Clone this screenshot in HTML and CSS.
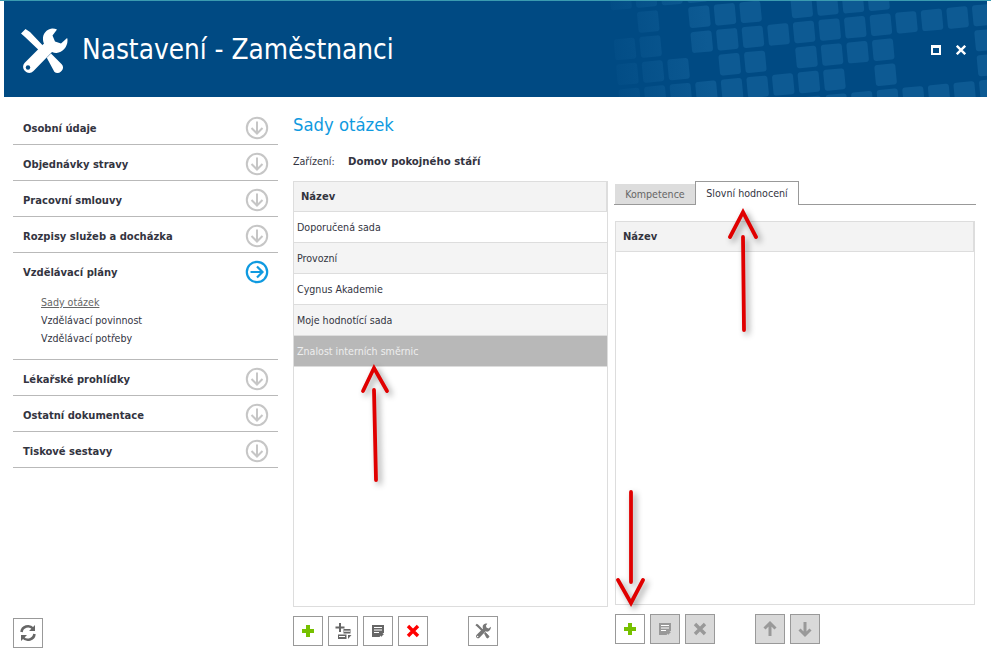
FILE: index.html
```html
<!DOCTYPE html>
<html>
<head>
    <title>Nastavení - Zaměstnanci</title>
    <link rel="stylesheet" href="styles.css">
</head>
<body>
    <svg class="sprite" width="0" height="0">
        <symbol id="i-down" viewBox="0 0 24 24"><circle cx="12" cy="12" r="10.2" fill="none" stroke="#c6c6c6" stroke-width="2"/><path d="M12 5.500v12M6.500 12l5.500 5.500 5.500-5.500" fill="none" stroke="#c6c6c6" stroke-width="2"/></symbol>
        <symbol id="i-right" viewBox="0 0 24 24"><circle cx="12" cy="12" r="10.2" fill="none" stroke="#0f9ae0" stroke-width="2.2"/><path d="M5.500 12h12M12 6.500l5.500 5.500-5.500 5.500" fill="none" stroke="#0f9ae0" stroke-width="2.2"/></symbol>
        <symbol id="i-tools" viewBox="0 0 48 48">
            <path d="M1 6.500 5.500 2 10 5 29 25l-4 4L5 10z" fill="currentColor"/>
            <path d="M28 31 31 28 41 38a3.500 3.500 0 0 1 0 5l-1 1a3.500 3.500 0 0 1-5 0z" fill="currentColor" stroke="currentColor" stroke-width="2"/>
            <path d="M32 1.500C26.500 2 22.500 7 23 12.500c0 1.500.5 3 1 4L5 35.500c-2.500 2.500-2.500 6 0 8.500s6 2.500 8.500 0L32 25c1.500.6 3 1 4.500.9C42.500 25.500 47.500 20 47.500 13.500c0-1-.1-2-.4-2.500L41 16.500 35 14.500 32.500 8.500 37 2.500C35.500 1.800 33.800 1.400 32 1.500z" fill="currentColor"/>
            <circle cx="8" cy="40.500" r="2.200" fill="var(--hole, #004a83)"/>
        </symbol>
        <symbol id="i-doc" viewBox="0 0 30 30"><path d="M9 9h12v7.500L16.500 21H9z" fill="currentColor"/><path d="M11 11.500h8M11 14h8M11 16.500h5" stroke="#fff" stroke-width="1"/><path d="M18 21v-3h3z" fill="currentColor"/></symbol>
        <symbol id="i-plus" viewBox="0 0 30 30"><path d="M13 9h4v4h4v4h-4v4h-4v-4H9v-4h4z" fill="#76c000"/></symbol>
        <symbol id="i-x" viewBox="0 0 30 30"><path d="M10 10l10 10M20 10 10 20" fill="none" stroke="currentColor" stroke-width="3.400"/></symbol>
    </svg>

    <div class="topline"></div>
    <div class="header">
        <svg class="pattern" width="983" height="96">
            <defs>
                <linearGradient id="fade" gradientUnits="userSpaceOnUse" x1="-135" y1="0" x2="-20" y2="0">
                    <stop offset="0" stop-color="#1a6aa3" stop-opacity="0"/>
                    <stop offset="1" stop-color="#1a6aa3" stop-opacity="0.5"/>
                </linearGradient>
            </defs>
            <g transform="translate(721 13.300) rotate(-5.400)" fill="url(#fade)">
                <rect class="sq" x="-113" y="-35.600"/><rect class="sq" x="-87.600" y="-35.600"/><rect class="sq" x="-61.900" y="-35.600"/><rect class="sq" x="-36.200" y="-35.600"/>
                <rect class="sq" x="-87.600" y="-10.500"/><rect class="sq" x="-36.200" y="-10.500"/><rect class="sq" x="-10.500" y="-10.500"/><rect class="sq" x="15.200" y="-10.500"/><rect class="sq" x="66.600" y="-10.500"/><rect class="sq" x="92.300" y="-10.500"/><rect class="sq" x="118" y="-10.500"/><rect class="sq" x="143.700" y="-10.500"/>
                <rect class="sq" x="-113.300" y="14.600"/><rect class="sq" x="-87.600" y="14.600"/><rect class="sq" x="-36.200" y="14.600"/><rect class="sq" x="-10.500" y="14.600"/><rect class="sq" x="15.200" y="14.600"/><rect class="sq" x="40.900" y="14.600"/><rect class="sq" x="66.600" y="14.600"/><rect class="sq" x="92.300" y="14.600"/><rect class="sq" x="118" y="14.600"/><rect class="sq" x="143.700" y="14.600"/><rect class="sq" x="169.400" y="14.600"/><rect class="sq" x="195.100" y="14.600"/><rect class="sq" x="220.800" y="14.600"/><rect class="sq" x="246.500" y="14.600"/>
                <rect class="sq" x="-113.300" y="39.700"/><rect class="sq" x="-87.600" y="39.700"/><rect class="sq" x="-61.900" y="39.700"/><rect class="sq" x="-10.500" y="39.700"/><rect class="sq" x="15.200" y="39.700"/><rect class="sq" x="66.600" y="39.700"/><rect class="sq" x="92.300" y="39.700"/><rect class="sq" x="118" y="39.700"/><rect class="sq" x="143.700" y="39.700"/><rect class="sq" x="246.500" y="39.700"/>
                <rect class="sq" x="-113.300" y="64.800"/><rect class="sq" x="-87.600" y="64.800"/><rect class="sq" x="-61.900" y="64.800"/><rect class="sq" x="-36.200" y="64.800"/><rect class="sq" x="-10.500" y="64.800"/><rect class="sq" x="15.200" y="64.800"/><rect class="sq" x="40.900" y="64.800"/><rect class="sq" x="66.600" y="64.800"/><rect class="sq" x="92.300" y="64.800"/><rect class="sq" x="143.700" y="64.800"/><rect class="sq" x="246.500" y="64.800"/>
                <rect class="sq" x="66.600" y="89.900"/><rect class="sq" x="92.300" y="89.900"/><rect class="sq" x="118" y="89.900"/><rect class="sq" x="143.700" y="89.900"/><rect class="sq" x="169.400" y="89.900"/><rect class="sq" x="195.100" y="89.900"/><rect class="sq" x="220.800" y="89.900"/><rect class="sq" x="246.500" y="89.900"/>
            </g>
        </svg>
        <svg class="logo"><use href="#i-tools"/></svg>
        <div class="title">Nastavení - Zaměstnanci</div>
        <div class="win-controls">
            <div class="win-max"></div>
            <svg class="win-close" viewBox="0 0 10 10"><path d="M.8.8l8.400 8.400M9.200.8.800 9.200" stroke="#fff" stroke-width="2.400"/></svg>
        </div>
    </div>

    <div class="content">
        <div class="sidebar">
            <div class="menu-item"><span>Osobní údaje</span><svg class="circle"><use href="#i-down"/></svg></div>
            <div class="menu-item"><span>Objednávky stravy</span><svg class="circle"><use href="#i-down"/></svg></div>
            <div class="menu-item"><span>Pracovní smlouvy</span><svg class="circle"><use href="#i-down"/></svg></div>
            <div class="menu-item"><span>Rozpisy služeb a docházka</span><svg class="circle"><use href="#i-down"/></svg></div>
            <div class="menu-group">
                <div class="menu-item open"><span>Vzdělávací plány</span><svg class="circle"><use href="#i-right"/></svg></div>
                <div class="submenu">
                    <a class="active">Sady otázek</a>
                    <a>Vzdělávací povinnost</a>
                    <a>Vzdělávací potřeby</a>
                </div>
            </div>
            <div class="menu-item"><span>Lékařské prohlídky</span><svg class="circle"><use href="#i-down"/></svg></div>
            <div class="menu-item"><span>Ostatní dokumentace</span><svg class="circle"><use href="#i-down"/></svg></div>
            <div class="menu-item"><span>Tiskové sestavy</span><svg class="circle"><use href="#i-down"/></svg></div>
            <div class="btn refresh">
                <svg class="icon" viewBox="0 0 30 30"><path d="M8.500 14a6.600 6.600 0 0 1 11.500-3.500M21.500 16a6.600 6.600 0 0 1-11.500 3.500" fill="none" stroke="#666" stroke-width="2.600"/><path d="M22 7v6h-6zM8 23v-6h6z" fill="#666"/></svg>
            </div>
        </div>

        <div class="main">
            <h1>Sady otázek</h1>
            <div class="facility"><span class="facility-label">Zařízení:</span><b>Domov pokojného stáří</b></div>
            <div class="panels">
                <div class="panel-left">
                    <div class="grid grid-sets">
                        <div class="grid-head">Název</div>
                        <div class="grid-row">Doporučená sada</div>
                        <div class="grid-row alt">Provozní</div>
                        <div class="grid-row">Cygnus Akademie</div>
                        <div class="grid-row alt">Moje hodnotící sada</div>
                        <div class="grid-row selected">Znalost interních směrnic</div>
                    </div>
                    <div class="toolbar">
                        <div class="btn"><svg class="icon"><use href="#i-plus"/></svg></div>
                        <div class="btn">
                            <svg class="icon dark" viewBox="0 0 30 30"><path d="M11 7h2v3.500h3.500v2H13V16h-2v-3.500H7.500v-2H11z"/><path d="M15.500 13h7v4.500h-7zM10 18.500h8.500V23H10z"/><path d="M20 23v-4h3.500z"/><path d="M16 15.200h6M11 20.500h6" stroke="#fff"/></svg>
                        </div>
                        <div class="btn"><svg class="icon dark"><use href="#i-doc"/></svg></div>
                        <div class="btn"><svg class="icon red"><use href="#i-x"/></svg></div>
                        <div class="btn tools-btn"><svg class="icon tools"><use href="#i-tools"/></svg></div>
                    </div>
                </div>
                <div class="panel-right">
                    <div class="tabs">
                        <div class="tab">Kompetence</div>
                        <div class="tab active">Slovní hodnocení</div>
                    </div>
                    <div class="grid grid-words">
                        <div class="grid-head">Název</div>
                    </div>
                    <div class="toolbar">
                        <div class="btn"><svg class="icon"><use href="#i-plus"/></svg></div>
                        <div class="btn off"><svg class="icon muted"><use href="#i-doc"/></svg></div>
                        <div class="btn off"><svg class="icon muted"><use href="#i-x"/></svg></div>
                        <div class="btn off arrows-start"><svg class="icon" viewBox="0 0 30 30"><path d="M15 22V9M9.500 14.500 15 9l5.500 5.500" fill="none" stroke="#999" stroke-width="3"/></svg></div>
                        <div class="btn off"><svg class="icon" viewBox="0 0 30 30"><path d="M15 8v13M9.500 15.500 15 21l5.500-5.500" fill="none" stroke="#999" stroke-width="3"/></svg></div>
                    </div>
                </div>
            </div>
        </div>
    </div>

    <!-- red arrows drawn over the screenshot -->
    <svg class="arrows" width="991" height="658">
        <path d="M363 391 374 368 387 391M374 390 376 480"/>
        <path d="M730 237 743 212 756 237M743 237 744 330"/>
        <path d="M618 580 631 603 643 580M631 492V582"/>
    </svg>
</body>
</html>
```

FILE: styles.css
```css
* { box-sizing: border-box; }
body { margin: 0; width: 991px; height: 658px; overflow: hidden; position: relative; background: #fff; color: #33343f; font-family: "DejaVu Sans Condensed", "DejaVu Sans", sans-serif; font-size: 10.6px; }
.sprite { position: absolute; }

.topline { height: 1px; background: #3a9bb0; }
.header { position: relative; height: 96px; margin: 0 4px; padding: 0 21px 0 16px; display: flex; align-items: center; background: #004a83; overflow: hidden; }
.pattern { position: absolute; left: 0; top: 0; }
.sq { width: 21px; height: 21px; rx: 3px; }
.logo { position: relative; width: 48px; height: 48px; margin: 3px 14px 0 0; color: #fff; }
.title { position: relative; font-size: 27.7px; color: #fff; }
.win-controls { position: relative; margin-left: auto; display: flex; align-items: center; gap: 15px; margin-top: 1px; }
.win-max { width: 10px; height: 10px; border: 2px solid #fff; border-top-width: 3px; }
.win-close { width: 10px; height: 10px; }

.content { display: flex; height: 561px; }
.sidebar { width: 293px; padding: 12px 15px 10px 13px; display: flex; flex-direction: column; }
.menu-item { height: 36px; padding: 0 10px; display: flex; align-items: center; justify-content: space-between; font-size: 11.1px; font-weight: bold; border-bottom: 1px solid #b9b9b9; }
.menu-item .circle { width: 24px; height: 24px; margin-right: -1px; margin-top: 2px; }
.menu-item span { margin-top: 3px; }
.menu-group { border-bottom: 1px solid #b9b9b9; padding-bottom: 12px; }
.menu-item.open { border-bottom: none; }
.submenu { padding: 4px 0 0 28px; display: flex; flex-direction: column; }
.submenu a { height: 18px; line-height: 18px; }
.submenu a.active { color: #666; text-decoration: underline; }
.refresh { margin-top: auto; }

.btn { width: 30px; height: 30px; border: 1px solid #999; background: #fff; }
.btn.off { background: #d9d9d9; }
.icon { display: block; width: 30px; height: 30px; margin: -1px; }
.icon.dark { color: #666; fill: #666; }
.icon.red { color: #f00; }
.icon.muted { color: #999; }
.icon.tools { padding: 7px; color: #777; --hole: #fff; }

.main { flex: 1; }
h1 { margin: 0; padding-top: 17px; height: 52px; font-size: 18.3px; font-weight: normal; color: #0f9ae0; }
.facility { height: 32px; padding-top: 6px; }
.facility b { font-size: 11.3px; }
.facility-label { display: inline-block; width: 55px; }
.panels { display: flex; gap: 6px; }
.panel-left { width: 315px; }
.panel-right { width: 362px; }

.grid { border: 1px solid #ddd; }
.grid-sets { height: 426px; }
.grid-words { height: 384px; margin: 16px 1px 0 1px; }
.grid-head { height: 30px; padding-left: 7px; line-height: 30px; font-size: 11.1px; font-weight: bold; background: #f3f3f3; border-bottom: 1px solid #ddd; border-right: 1px solid #ddd; }
.grid-row { height: 31px; padding-left: 3px; line-height: 30px; border-bottom: 1px solid #ddd; }
.grid-row.alt { background: #f4f4f4; }
.grid-row.selected { background: #b8b8b8; color: #eee; }

.tabs { height: 24px; display: flex; align-items: flex-end; padding-left: 1px; border-bottom: 1px solid #999; }
.tab { height: 20px; width: 80px; text-align: center; line-height: 20px; background: #ddd; color: #666; }
.tab.active { position: relative; top: 1px; height: 24px; width: 104px; line-height: 22px; background: #fff; color: #33343f; border: 1px solid #999; border-bottom: none; }

.toolbar { display: flex; gap: 5px; padding-top: 9px; }
.panel-right .toolbar { margin-left: 1px; }
.tools-btn { margin-left: 35px; }
.arrows-start { margin-left: 35px; }

.arrows { position: absolute; left: 0; top: 0; pointer-events: none; fill: none; stroke: #e00000; stroke-width: 3.8; stroke-linecap: round; stroke-linejoin: miter; filter: drop-shadow(3px 3px 3px rgba(0,0,0,0.4)); }
```
